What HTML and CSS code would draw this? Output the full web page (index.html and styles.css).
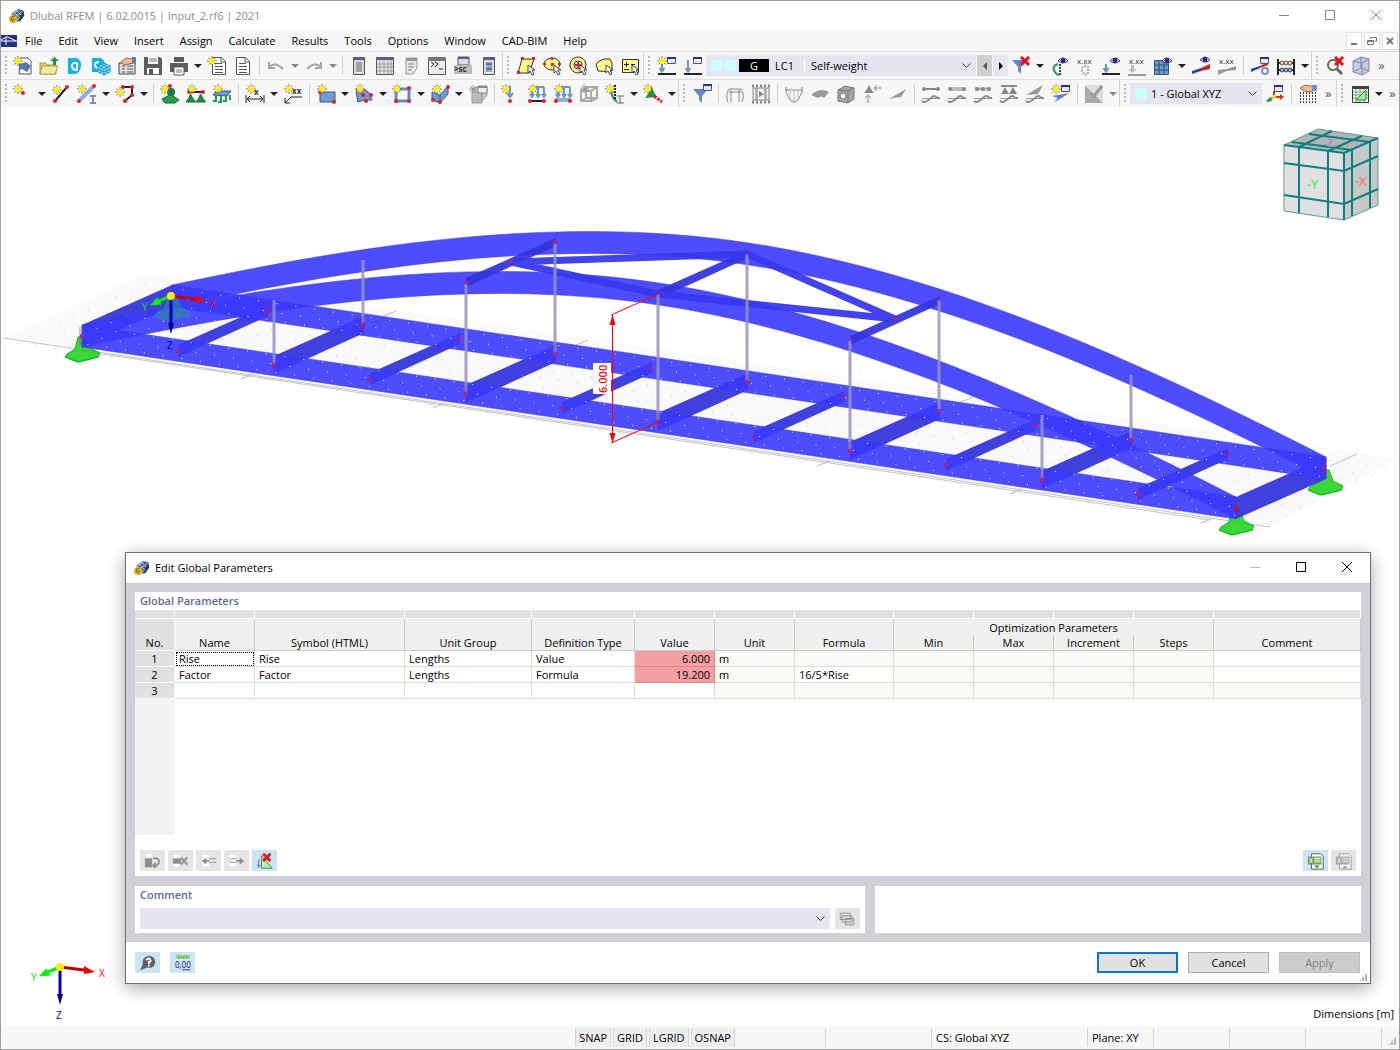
FILE: index.html
```html
<!DOCTYPE html>
<html lang="en">
<head>
  <meta charset="UTF-8">
  <title>Dlubal RFEM</title>
  <link rel="stylesheet" href="styles.css">
</head>
<body>

<!-- icon sprite -->
<svg class="sprite" aria-hidden="true">
  <defs>
    <g id="star"><path d="M5 0v10M0 5h10M1.500 1.500l7 7M8.500 1.500l-7 7" stroke="#7b7b5a"/><circle cx="5" cy="5" r="3" fill="#ffee14"/></g>
    <g id="eye"><path d="M0 4Q5 -2 10 4Q5 8 0 4z" fill="#fff" stroke="#3a3a4a"/><circle cx="5" cy="3.500" r="2.500" fill="#24248c"/></g>
    <g id="win"><path d="M.5.5h8v6h-8z" fill="#e8e8ec" stroke="#555"/><path d="M0 0h9v2H0z" fill="#2a2aa0"/></g>
    <g id="redx"><path d="M1 1l8 8M9 1L1 9" stroke="#e8101c" stroke-width="3"/></g>
    <g id="cursor"><path d="M0 0v8l2-2 2 4 2-1-2-4h3z" fill="#fff" stroke="#444"/></g>
    <g id="page"><path d="M.5.5h9l4 4v13H.5z" fill="#fff" stroke="#555"/><path d="M9 1v4h4M3 6.500h7M3 9.500h8M3 12.500h8M3 15.500h8" fill="none" stroke="#555"/></g>
    <g id="panel"><path d="M.5.5h11v17H.5z" fill="#d8d8d8" stroke="#555"/><path d="M0 0h12v3H0z" fill="#5a5a8c"/><path d="M3 5h6v11H3z" fill="#fff"/><path d="M3 6h6M3 8h6M3 10h6M3 12h6M3 14h6" stroke="#444"/></g>
    <g id="load"><path d="M4 8v7M1.500 12L4 15.500 6.500 12" fill="none" stroke="#6d94c8" stroke-width="2"/><path d="M0 18h18" stroke="#222" stroke-width="2"/></g>
    <g id="supp"><path d="M4.500 0l2 4 3 4H0l3-4z" fill="#1d8f43" stroke="#0c6b2c"/></g>
    <g id="wave"><path d="M1 14.500h18" stroke="#999"/><path d="M1 17q2 2 5 0t4-3q4-4 6 0l3 0" fill="none" stroke="#8c8c8c" stroke-width="2"/></g>
  </defs>
  <symbol id="logo" viewBox="0 0 20 20"><path d="M4 8l8-6 6 2 1 6-5 7H9z" fill="#45608f"/><path d="M7 6l8 8M10 4l7 7M5 9l9-7M8 12l9-7M10 16l8-7" stroke="#c4d3ea"/><path d="M18 4l1 6-5 7-1-3z" fill="#293a5e"/><circle cx="6" cy="14" r="5" fill="#e2b62b"/><path d="M8 11q-5-1-4 4 2 3 4 0-1-3-4 0" fill="none" stroke="#6e5410"/></symbol>
  <symbol id="i-new" viewBox="0 0 20 20"><path d="M7 2h8l3 3v13H6z" fill="#fff" stroke="#555"/><path d="M7 8l6-2 5 4-4 6-5-3-3 2z" fill="#5479ad"/><use href="#star"/></symbol>
  <symbol id="i-open" viewBox="0 0 20 20"><path d="M1 7h6l1 2h9v9H1z" fill="#e3cd6c" stroke="#b39b3c"/><path d="M3 10h16l-3 8H1z" fill="#f7e9a6" stroke="#b39b3c"/><path d="M14 9V5h-3l4.500-4L20 5h-3v4z" fill="#149447"/></symbol>
  <symbol id="i-c" viewBox="0 0 20 20"><path d="M3 2h9q5 3 4 8-1 7-6 8H3z" fill="#14b3e0"/><path d="M12 7q-5-1-5 3t5 4z" fill="none" stroke="#fff" stroke-width="2"/></symbol>
  <symbol id="i-ccube" viewBox="0 0 20 20"><path d="M1 2h9q5 3 3 8l-4 6H1z" fill="#14b3e0"/><path d="M8 6q-4 0-4 3t4 3" fill="none" stroke="#fff" stroke-width="2"/><path d="M7 10l6-3 6 3v6l-6 3-6-3z" fill="#9be0f5" stroke="#119ccc"/><path d="M7 10l6 3 6-3M13 13v6M7 13l6 3 6-3M10 8l6 3v6M16 8l-6 3v6" fill="none" stroke="#119ccc"/></symbol>
  <symbol id="i-hand" viewBox="0 0 20 20"><path d="M2 7h16v11H2z" fill="#ddd" stroke="#444"/><path d="M5 10h3M10 10h6M5 13h3M10 13h6M5 16h3M10 16h6" stroke="#555"/><path d="M4 6l5-4 7 1v4l-8 2-2-1z" fill="#edbd91" stroke="#9a6a40"/><path d="M15 1h4v6h-4z" fill="#577fb3"/></symbol>
  <symbol id="i-save" viewBox="0 0 20 20"><path d="M1 1h16l2 2v16H1z" fill="#5c5c5c"/><path d="M5 1h10v7H5zM4 12h12v6H4z" fill="#fff"/><path d="M6 3h8M6 5h8" stroke="#777"/><path d="M6 13h4v5H6z" fill="#5c5c5c"/></symbol>
  <symbol id="i-print" viewBox="0 0 20 20"><path d="M5 1h10v5H5zM1 7h18v9H1z" fill="#5c5c5c"/><path d="M5 11h10v8H5z" fill="#fff" stroke="#5c5c5c"/><path d="M7 14h6M7 16h6" stroke="#777"/></symbol>
  <symbol id="i-newdoc" viewBox="0 0 20 20"><use href="#page" x="5" y="1"/><use href="#star"/></symbol>
  <symbol id="i-doc" viewBox="0 0 20 20"><use href="#page" x="3" y="1"/></symbol>
  <symbol id="i-undo" viewBox="0 0 20 20"><path d="M3 6v6h6M3 11q6-6 14 2" fill="none" stroke="#a6a6a6" stroke-width="2"/></symbol>
  <symbol id="i-redo" viewBox="0 0 20 20"><path d="M17 6v6h-6M17 11q-6-6-14 2" fill="none" stroke="#a6a6a6" stroke-width="2"/></symbol>
  <symbol id="i-panel" viewBox="0 0 20 20"><use href="#panel" x="4" y="1"/></symbol>
  <symbol id="i-table" viewBox="0 0 20 20"><path d="M1.500 1.500h17v17h-17z" fill="#e8e8e8" stroke="#555"/><path d="M1 1h18v3H1z" fill="#5a5a8c"/><path d="M2 8h16M2 11h16M2 15h16M5 4v14M9 4v14M13 4v14M16 4v14" stroke="#999"/></symbol>
  <symbol id="i-panel2" viewBox="0 0 20 20"><path d="M5 2h11v10l-4 6H5z" fill="#e6e6e6" stroke="#999"/><path d="M5 2h11v3H5z" fill="#999"/><path d="M7 8h6M7 11h6M7 14h4" stroke="#888"/></symbol>
  <symbol id="i-console" viewBox="0 0 20 20"><path d="M1.500 1.500h17v17h-17z" fill="#eee" stroke="#555"/><path d="M1 1h18v4H1z" fill="#777"/><path d="M4 6l3 2-3 3M8 6l3 2-3 3M12 13h4" fill="none" stroke="#222"/></symbol>
  <symbol id="i-panel3" viewBox="0 0 20 20"><use href="#panel" x="4" y="1"/><path d="M7 8h6M7 13h6" stroke="#4a78c0" stroke-width="2"/></symbol>
  <symbol id="i-selbox" viewBox="0 0 20 20"><path d="M6 3h12l-5 14H2z" fill="#fff68a" stroke="#333"/><g fill="#e0202a"><path d="M5 1h3v3H5zM16 1h3v3h-3zM1 15h3v3H1z"/></g><use href="#cursor" x="12" y="9"/></symbol>
  <symbol id="i-selell" viewBox="0 0 20 20"><ellipse cx="10" cy="8" rx="8" ry="6" fill="#fff68a" stroke="#333"/><path d="M10 1v3M10 7v3M1 8h3M9 8h3M16 8h3" stroke="#e0202a" stroke-width="2"/><use href="#cursor" x="12" y="9"/></symbol>
  <symbol id="i-selring" viewBox="0 0 20 20"><circle cx="10" cy="9" r="8" fill="#fff68a" stroke="#333"/><circle cx="10" cy="9" r="4" fill="#fff" stroke="#333"/><path d="M10 6v6M7 9h6" stroke="#e0202a" stroke-width="2"/><use href="#cursor" x="12" y="9"/></symbol>
  <symbol id="i-sellasso" viewBox="0 0 20 20"><path d="M2 8q2-3 8-5h6l2 4v8q-2 1-14 0z" fill="#fff68a" stroke="#333"/><use href="#cursor" x="12" y="9"/></symbol>
  <symbol id="i-selpm" viewBox="0 0 20 20"><path d="M2.500 3.500h16v13h-16z" fill="#fff68a" stroke="#333"/><path d="M4 8.500h5M6.500 6v5M4 13.500h5M11 8.500h4" stroke="#222"/><use href="#cursor" x="12" y="9"/></symbol>
  <symbol id="i-lcnew" viewBox="0 0 20 20"><use href="#load" x="1"/><use href="#win" x="10" y="1"/><use href="#star"/></symbol>
  <symbol id="i-lc" viewBox="0 0 20 20"><use href="#load" x="1"/><use href="#win" x="10" y="1"/><path d="M5 4v8" stroke="#6d94c8" stroke-width="2"/></symbol>
  <symbol id="i-filterx" viewBox="0 0 20 20"><path d="M1 4h15l-6 7v7l-3-3v-4z" fill="#6289c6"/><use href="#redx" x="9"/></symbol>
  <symbol id="i-filterwin" viewBox="0 0 20 20"><path d="M1 5h15l-6 7v7l-3-3v-4z" fill="#6289c6"/><use href="#win" x="11"/></symbol>
  <symbol id="i-nodeeye" viewBox="0 0 20 20"><path d="M9 8q-6 2-4 6 1 4 5 5" fill="none" stroke="#1f9a4c" stroke-width="2"/><path d="M11 8v11" fill="none" stroke="#444" stroke-width="2" stroke-dasharray="2 1"/><use href="#eye" x="9" y="1"/></symbol>
  <symbol id="i-loadeye" viewBox="0 0 20 20"><use href="#load" x="1"/><use href="#eye" x="9" y="1"/></symbol>
  <symbol id="i-grideye" viewBox="0 0 20 20"><path d="M1.500 4.500h14v14h-14z" fill="#6d9bcc" stroke="#35597f"/><path d="M1 9h15M1 14h15M6 4v15M11 4v15" stroke="#2d4e74"/><use href="#eye" x="9" y="1"/></symbol>
  <symbol id="i-reseye" viewBox="0 0 20 20"><path d="M1 15l9-3v3l-9 3z" fill="#2343a8"/><path d="M10 12l9-4v5l-9 2z" fill="#c8202a"/><use href="#eye" x="9" y="0"/></symbol>
  <symbol id="i-resgear" viewBox="0 0 20 20"><path d="M1 13l9-3v2l-9 4z" fill="#2343a8"/><path d="M10 10l8-4v3l-8 3z" fill="#c8202a"/><use href="#win" x="10" y="1"/><circle cx="15" cy="15" r="3" fill="#fff" stroke="#6d94d8" stroke-width="2"/></symbol>
  <symbol id="i-abacus" viewBox="0 0 20 20"><path d="M2 3v16M18 3v16M1 7h18M1 14h18" fill="none" stroke="#222" stroke-width="2"/><g fill="#f0e4a0" stroke="#555"><circle cx="6" cy="7" r="2"/><circle cx="10" cy="7" r="2"/><circle cx="14" cy="7" r="2"/></g><g fill="#8fb2e8" stroke="#446"><circle cx="6" cy="14" r="2"/><circle cx="10" cy="14" r="2"/><circle cx="14" cy="14" r="2"/></g></symbol>
  <symbol id="i-zoomx" viewBox="0 0 20 20"><circle cx="8" cy="9" r="5" fill="#fff" stroke="#666" stroke-width="2"/><path d="M12 13l5 5" stroke="#666" stroke-width="3"/><use href="#redx" x="9"/></symbol>
  <symbol id="i-cube" viewBox="0 0 20 20"><path d="M2 5l8-4 8 2v12l-7 4-9-3z" fill="#c3cbe0" stroke="#8089a6"/><path d="M2 5l9 2 7-4M11 7v12M10 1v11l-8 4M10 12l8 3" fill="none" stroke="#8089a6"/></symbol>
  <symbol id="i-node" viewBox="0 0 20 20"><use href="#star"/><circle cx="10" cy="9" r="2" fill="#e0202a"/></symbol>
  <symbol id="i-line" viewBox="0 0 20 20"><path d="M4 17L16 3" stroke="#222" stroke-width="2"/><circle cx="4" cy="17" r="2" fill="#e0202a"/><circle cx="16" cy="3" r="2" fill="#e0202a"/><use href="#star" x="1" y="1"/></symbol>
  <symbol id="i-member" viewBox="0 0 20 20"><path d="M3 16L16 3" stroke="#8fb0dc" stroke-width="4"/><circle cx="2" cy="17" r="2" fill="#e0202a"/><circle cx="17" cy="2" r="2" fill="#e0202a"/><path d="M13 12h6M16 12v7M13 19h6" stroke="#8a8aa8" stroke-width="2"/><use href="#star"/></symbol>
  <symbol id="i-poly" viewBox="0 0 20 20"><path d="M6 3h11v8l-7 6" fill="none" stroke="#222" stroke-width="2"/><g fill="#e0202a"><circle cx="8" cy="3" r="2"/><circle cx="17" cy="3" r="2"/><circle cx="17" cy="11" r="2"/><circle cx="10" cy="17" r="2"/></g><use href="#star" y="3"/></symbol>
  <symbol id="i-nsup" viewBox="0 0 20 20"><path d="M11 7l2 5 6 4-4 3H5l-3-4 6-3z" fill="#22a050" stroke="#0c6b2c"/><circle cx="11" cy="8" r="4" fill="#1b7c3d"/><use href="#star"/><circle cx="10" cy="2" r="2" fill="#e0202a"/></symbol>
  <symbol id="i-lsup" viewBox="0 0 20 20"><path d="M3 8h14" stroke="#222" stroke-width="2"/><circle cx="3" cy="8" r="2" fill="#e0202a"/><circle cx="17" cy="8" r="2" fill="#e0202a"/><use href="#supp" x="0" y="10"/><use href="#supp" x="10" y="10"/><use href="#star" x="1"/></symbol>
  <symbol id="i-ssup" viewBox="0 0 20 20"><path d="M1 11l4-4h14l-4 5z" fill="#6f9bd0" stroke="#35597f"/><path d="M4 12v5h-3M9 12v6h-3M14 12v5h-3M18 11v5" fill="none" stroke="#1d9f53" stroke-width="2"/><use href="#star" x="1"/></symbol>
  <symbol id="i-surf" viewBox="0 0 20 20"><path d="M4 8h15v10H4z" fill="#6f9bd0" stroke="#35597f"/><circle cx="4" cy="8" r="2" fill="#e0202a"/><circle cx="18" cy="18" r="2" fill="#e0202a"/><use href="#star" x="1"/></symbol>
  <symbol id="i-nurbs" viewBox="0 0 20 20"><path d="M2 8q7-6 13 1l3 7q-8-1-14 2z" fill="#6f9bd0" stroke="#35597f"/><g fill="#e0202a"><circle cx="4" cy="6" r="2"/><circle cx="9" cy="11" r="2"/><circle cx="17" cy="11" r="2"/><circle cx="12" cy="17" r="2"/></g><use href="#star" x="1"/></symbol>
  <symbol id="i-opening" viewBox="0 0 20 20"><path d="M4 5h13v12H4z" fill="#fff" stroke="#5f8cc4" stroke-width="3"/><g fill="#e0202a"><circle cx="17" cy="4" r="2"/><circle cx="4" cy="17" r="2"/><circle cx="17" cy="17" r="2"/></g><use href="#star"/></symbol>
  <symbol id="i-solid" viewBox="0 0 20 20"><path d="M2 8l8 3 8-9v8l-8 9-8-3z" fill="#6f9bd0" stroke="#35597f"/><path d="M10 11v8" stroke="#35597f"/><g fill="#e0202a"><circle cx="18" cy="3" r="2"/><circle cx="3" cy="16" r="2"/><circle cx="10" cy="18" r="2"/></g><use href="#star" x="2"/></symbol>
  <symbol id="i-block" viewBox="0 0 20 20"><path d="M4 8h10v11H4z" fill="#bbb" stroke="#999"/><path d="M4 8l4-5h11v8l-5 6V8z" fill="#ccc" stroke="#999"/><path d="M10 2h9v7h-9z" fill="#eee" stroke="#888"/><path d="M10 2h9v2h-9z" fill="#888"/><path d="M5 1v8M1 5h8M2 2l6 6M8 2L2 8" stroke="#999"/></symbol>
  <symbol id="i-nload" viewBox="0 0 20 20"><use href="#star"/><path d="M9 2v10M6 9l3 4 3-4" fill="none" stroke="#6d94c8" stroke-width="2"/><circle cx="9" cy="17" r="2" fill="#e0202a"/></symbol>
  <symbol id="i-lload" viewBox="0 0 20 20"><path d="M5 3h12M5 3v10M11 3v10M17 3v10M3 10l2 3 2-3M9 10l2 3 2-3M15 10l2 3 2-3" fill="none" stroke="#6d94c8" stroke-width="2"/><path d="M3 17h14" stroke="#222" stroke-width="2"/><circle cx="3" cy="17" r="2" fill="#e0202a"/><circle cx="17" cy="17" r="2" fill="#e0202a"/><use href="#star" x="1"/></symbol>
  <symbol id="i-sload" viewBox="0 0 20 20"><path d="M2 14h16v4H2z" fill="#8fb0dc"/><path d="M5 3h12M5 3v10M11 3v10M17 3v10M3 10l2 3 2-3M9 10l2 3 2-3M15 10l2 3 2-3" fill="none" stroke="#6d94c8" stroke-width="2"/><circle cx="3" cy="17" r="2" fill="#e0202a"/><circle cx="17" cy="17" r="2" fill="#e0202a"/><use href="#star" x="1"/></symbol>
  <symbol id="i-gload" viewBox="0 0 20 20"><path d="M2 7h10v10H2zM7 3h11v11H7zM2 7l5-4M12 7l6-4M12 17l6-3M2 17l5-3" fill="none" stroke="#aaa" stroke-width="2"/><path d="M5 0v9M1 5h9M2 2l6 6M8 2L2 8" stroke="#999"/></symbol>
  <symbol id="i-imper" viewBox="0 0 20 20"><path d="M6 4q0 10 6 14" fill="none" stroke="#1f9a4c" stroke-width="2"/><path d="M10 1v15" stroke="#222" stroke-width="2" stroke-dasharray="2 1"/><path d="M12 12h7M15 12v7M12 19h7" stroke="#666"/><use href="#star"/></symbol>
  <symbol id="i-conn" viewBox="0 0 20 20"><path d="M8 2l4 8 2 3-12 1 3-4z" fill="#22904a"/><path d="M11 12l8 6" stroke="#e0202a" stroke-width="3" stroke-dasharray="3 1"/><use href="#star"/></symbol>
  <symbol id="i-frame" viewBox="0 0 20 20"><path d="M3 18q-3-7 1-13h12q4 6 1 13M6 18V6M14 18V6M4 8h12" fill="none" stroke="#888"/></symbol>
  <symbol id="i-film" viewBox="0 0 20 20"><path d="M1 2h18M1 18h18" stroke="#888" stroke-width="3" stroke-dasharray="2 2"/><path d="M2 4h3v12H2zM15 4h3v12h-3zM6 4h8v12H6z" fill="#eee" stroke="#888"/><path d="M8 7l5 3-5 3z" fill="#888"/></symbol>
  <symbol id="i-moment" viewBox="0 0 20 20"><path d="M1 6h18M2 3v5l4 8q4 4 8 0l4-8V3" fill="none" stroke="#888"/><path d="M6 7v9M10 7v10M14 7v9" stroke="#bbb"/></symbol>
  <symbol id="i-shell" viewBox="0 0 20 20"><path d="M1 11q9-8 18-3l-5 6q-3-3-6 0z" fill="#999"/></symbol>
  <symbol id="i-dice" viewBox="0 0 20 20"><path d="M2 6l7-4 9 2v11l-6 4-10-2z" fill="#a4a4a4" stroke="#777"/><path d="M2 6l10 1v12M12 7l6-3" fill="none" stroke="#777"/><circle cx="7" cy="12" r="3" fill="#fff" stroke="#777"/></symbol>
  <symbol id="i-reac" viewBox="0 0 20 20"><path d="M7 1l2 4 3 4H2l3-4z" fill="#888"/><path d="M12 4h7M15 1l-3 3 3 3M6 11v8M3 14l3-3 3 3" fill="none" stroke="#888" stroke-width="1"/></symbol>
  <symbol id="i-slope" viewBox="0 0 20 20"><path d="M1 15L18 5l-5 8q-5 0-12 2z" fill="#999"/></symbol>
  <symbol id="i-w1" viewBox="0 0 20 20"><use href="#wave"/><path d="M2 5h16" stroke="#888" stroke-width="2"/><circle cx="3" cy="5" r="2" fill="#888"/><circle cx="17" cy="5" r="2" fill="#888"/></symbol>
  <symbol id="i-w2" viewBox="0 0 20 20"><use href="#wave"/><path d="M3 5h14" stroke="#bbb" stroke-width="4"/><circle cx="3" cy="5" r="2" fill="#888"/><circle cx="17" cy="5" r="2" fill="#888"/></symbol>
  <symbol id="i-w3" viewBox="0 0 20 20"><use href="#wave"/><path d="M2 5h16" stroke="#bbb" stroke-width="3"/><circle cx="4" cy="5" r="2" fill="#888"/><circle cx="10" cy="5" r="2" fill="#888"/><circle cx="16" cy="5" r="2" fill="#888"/></symbol>
  <symbol id="i-w4" viewBox="0 0 20 20"><use href="#wave"/><path d="M2 2h16" stroke="#888" stroke-width="2"/><path d="M6 3l4 7H2zM14 3l4 7h-8z" fill="#888"/></symbol>
  <symbol id="i-w5" viewBox="0 0 20 20"><use href="#wave"/><path d="M1 11L18 1l-5 9z" fill="#999"/></symbol>
  <symbol id="i-resnew" viewBox="0 0 20 20"><path d="M1 12l17-3-6 4-10 6 5-5z" fill="#5a7ae0"/><use href="#win" x="10" y="1"/><use href="#star"/></symbol>
  <symbol id="i-tri" viewBox="0 0 20 20"><path d="M1 1v18h18z" fill="#aaa"/><path d="M1 1h18v18z" fill="#ddd"/><path d="M7 10l3 2 8-10" fill="none" stroke="#999" stroke-width="3"/></symbol>
  <symbol id="i-axes" viewBox="0 0 20 20"><use href="#win" x="9" y="1"/><path d="M9 7v6M9 13h9" stroke="#c83818" stroke-width="2"/><path d="M9 13l-7 4" stroke="#1f9a4c" stroke-width="2"/><path d="M5 13l-4 5 6-1z" fill="#1f9a4c"/><path d="M15 10l4 3-4 3z" fill="#c83818"/><circle cx="9" cy="13" r="2" fill="#ffdf20"/></symbol>
  <symbol id="i-gridhand" viewBox="0 0 20 20"><path d="M2 9h16M2 12h16M2 15h16M2 18h16" stroke="#444" stroke-width="2" stroke-dasharray="1 2"/><path d="M2 4l6-3 8 2-2 5-8-1z" fill="#edbd91" stroke="#9a6a40"/><path d="M14 1h5v6h-5z" fill="#6d94c8"/></symbol>
  <symbol id="i-gtable" viewBox="0 0 20 20"><path d="M2.500 2.500h16v16h-16z" fill="#fff" stroke="#333"/><path d="M2 2h17v3H2z" fill="#444"/><path d="M3 8h15M3 11h15M3 14h15M6 5v13M10 5v13M14 5v13" stroke="#6aa66a"/><path d="M16 6v10H6z" fill="#a9e6a0" stroke="#2b8a3a"/></symbol>
</svg>

<div class="app">
  <header class="titlebar">
    <svg class="logo"><use href="#logo"/></svg>
    <span class="title">Dlubal RFEM | 6.02.0015 | Input_2.rf6 | 2021</span>
    <div class="winbtns">
      <button aria-label="Minimize"><svg viewBox="0 0 12 12"><path d="M1 6.500h10"/></svg></button>
      <button aria-label="Maximize"><svg viewBox="0 0 12 12"><path d="M1.500 1.500h9v9h-9z"/></svg></button>
      <button aria-label="Close"><svg viewBox="0 0 12 12"><path d="M1 1l10 10M11 1L1 11"/></svg></button>
    </div>
  </header>

  <nav class="menubar">
    <svg class="menulogo" viewBox="0 0 16 12"><path d="M0 0h16v12H0z" fill="#26307c"/><path d="M0 6h16M5 2v8M0 5l5-3h2l8 4" fill="none" stroke="#fff"/></svg>
    <button>File</button><button>Edit</button><button>View</button><button>Insert</button><button>Assign</button><button>Calculate</button><button>Results</button><button>Tools</button><button>Options</button><button>Window</button><button>CAD-BIM</button><button>Help</button>
    <div class="mdi">
      <button aria-label="Minimize document"><svg viewBox="0 0 10 10"><path d="M2 8h6"/></svg></button>
      <button aria-label="Restore document"><svg viewBox="0 0 10 10"><path class="thin" d="M3.500 3V1.500h6v4H8M.5 4.500h6v4h-6zM.5 5.500h6"/></svg></button>
      <button aria-label="Close document"><svg viewBox="0 0 10 10"><path d="M2 2l6 6M8 2L2 8"/></svg></button>
    </div>
  </nav>

  <div class="toolbar">
    <div class="group">
      <button class="tool" aria-label="New"><svg><use href="#i-new"/></svg></button>
      <button class="tool" aria-label="Open"><svg><use href="#i-open"/></svg></button>
      <button class="tool" aria-label="Dlubal Center"><svg><use href="#i-c"/></svg></button>
      <button class="tool" aria-label="Block manager"><svg><use href="#i-ccube"/></svg></button>
      <button class="tool" aria-label="Model data"><svg><use href="#i-hand"/></svg></button>
      <button class="tool" aria-label="Save"><svg><use href="#i-save"/></svg></button>
      <button class="tool" aria-label="Print"><svg><use href="#i-print"/></svg></button>
      <button class="drop" aria-label="Print options"></button>
      <button class="tool" aria-label="New report"><svg><use href="#i-newdoc"/></svg></button>
      <button class="tool" aria-label="Report"><svg><use href="#i-doc"/></svg></button>
      <i class="sep"></i>
      <button class="tool" aria-label="Undo"><svg><use href="#i-undo"/></svg></button>
      <button class="drop off" aria-label="Undo list"></button>
      <button class="tool" aria-label="Redo"><svg><use href="#i-redo"/></svg></button>
      <button class="drop off" aria-label="Redo list"></button>
      <i class="sep"></i>
      <button class="tool" aria-label="Navigator"><svg><use href="#i-panel"/></svg></button>
      <button class="tool" aria-label="Tables"><svg><use href="#i-table"/></svg></button>
      <button class="tool" aria-label="Control panel"><svg><use href="#i-panel2"/></svg></button>
      <button class="tool" aria-label="Console"><svg><use href="#i-console"/></svg></button>
      <button class="tool" aria-label="Script manager"><svg viewBox="0 0 20 20"><path d="M5 1h11v8H5z" fill="#ddd" stroke="#555"/><path d="M5 1h11v2H5z" fill="#5a5a8c"/><path d="M1 9h18v9H1z" fill="#bbb"/><text x="1" y="16" class="tiny bold">&gt;sc</text></svg></button>
      <button class="tool" aria-label="Plausibility"><svg><use href="#i-panel3"/></svg></button>
    </div>
    <div class="group">
      <button class="tool" aria-label="Select by rhomboid"><svg><use href="#i-selbox"/></svg></button>
      <button class="tool" aria-label="Select by ellipse"><svg><use href="#i-selell"/></svg></button>
      <button class="tool" aria-label="Select by ring"><svg><use href="#i-selring"/></svg></button>
      <button class="tool" aria-label="Select by lasso"><svg><use href="#i-sellasso"/></svg></button>
      <button class="tool" aria-label="Select special"><svg><use href="#i-selpm"/></svg></button>
    </div>
    <div class="group">
      <button class="tool" aria-label="New load case"><svg><use href="#i-lcnew"/></svg></button>
      <button class="tool" aria-label="Load cases"><svg><use href="#i-lc"/></svg></button>
      <div class="combo loadcase">
        <i class="swatch"></i><i class="swatch"></i><b class="tag">G</b><span class="lc">LC1</span>
        <select aria-label="Load case"><option>Self-weight</option></select>
      </div>
      <button class="step prev" aria-label="Previous load case"></button>
      <button class="step next" aria-label="Next load case"></button>
      <button class="tool" aria-label="Clear filter"><svg><use href="#i-filterx"/></svg></button>
      <button class="drop" aria-label="Filter options"></button>
      <button class="tool" aria-label="Show imperfections"><svg><use href="#i-nodeeye"/></svg></button>
      <button class="tool" aria-label="Imperfection values"><svg viewBox="0 0 20 20"><text x="2" y="8" class="tiny">x.xx</text><path d="M11 10q-5 1-4 5 1 3 5 4M13 10v9" fill="none" stroke="#aaa" stroke-width="2" stroke-dasharray="2 1"/></svg></button>
      <button class="tool" aria-label="Show loads"><svg><use href="#i-loadeye"/></svg></button>
      <button class="tool" aria-label="Load values"><svg viewBox="0 0 20 20"><text x="2" y="8" class="tiny">x.xx</text><path d="M4 9h3v4h3l-4.500 4L1 13h3z" fill="#bbb"/><path d="M1 19h18" stroke="#999" stroke-width="2"/></svg></button>
      <button class="tool" aria-label="Show mesh"><svg><use href="#i-grideye"/></svg></button>
      <button class="drop" aria-label="Mesh options"></button>
      <button class="tool" aria-label="Show results"><svg><use href="#i-reseye"/></svg></button>
      <button class="tool" aria-label="Result values"><svg viewBox="0 0 20 20"><text x="2" y="8" class="tiny">x.xx</text><path d="M1 14l9-1 9-3v4l-9 1-9 4z" fill="#999"/></svg></button>
      <i class="sep"></i>
      <button class="tool" aria-label="Calculate"><svg><use href="#i-resgear"/></svg></button>
      <button class="tool" aria-label="Calculate all"><svg><use href="#i-abacus"/></svg></button>
      <button class="drop" aria-label="Calculation options"></button>
    </div>
    <div class="group last">
      <button class="tool" aria-label="Reset zoom"><svg><use href="#i-zoomx"/></svg></button>
      <button class="tool" aria-label="Isometric view"><svg><use href="#i-cube"/></svg></button>
      <button class="more" aria-label="More view tools">»</button>
    </div>
  </div>

  <div class="toolbar">
    <div class="group">
      <button class="tool" aria-label="New node"><svg><use href="#i-node"/></svg></button>
      <button class="drop" aria-label="Node types"></button>
      <button class="tool" aria-label="New line"><svg><use href="#i-line"/></svg></button>
      <button class="tool" aria-label="New member"><svg><use href="#i-member"/></svg></button>
      <button class="drop" aria-label="Member types"></button>
      <button class="tool" aria-label="New polyline"><svg><use href="#i-poly"/></svg></button>
      <button class="drop" aria-label="Line types"></button>
      <i class="sep"></i>
      <button class="tool" aria-label="Nodal support"><svg><use href="#i-nsup"/></svg></button>
      <button class="tool" aria-label="Line support"><svg><use href="#i-lsup"/></svg></button>
      <button class="tool" aria-label="Surface support"><svg><use href="#i-ssup"/></svg></button>
      <i class="sep"></i>
      <button class="tool" aria-label="Dimension"><svg viewBox="0 0 20 20"><path d="M1 11v8M19 11v8M2 15h16M5 12l-3 3 3 3M15 12l3 3-3 3" fill="none" stroke="#222"/><text x="9" y="11" class="tiny bold">x</text><use href="#star" x="1"/></svg></button>
      <button class="drop" aria-label="Dimension types"></button>
      <button class="tool" aria-label="Note"><svg viewBox="0 0 20 20"><path d="M19 13H8l-6 6M2 14v5h5" fill="none" stroke="#222"/><text x="9" y="10" class="tiny bold">xx</text><use href="#star" x="1"/></svg></button>
      <i class="sep"></i>
      <button class="tool" aria-label="New surface"><svg><use href="#i-surf"/></svg></button>
      <button class="drop" aria-label="Surface types"></button>
      <button class="tool" aria-label="New NURBS surface"><svg><use href="#i-nurbs"/></svg></button>
      <button class="drop" aria-label="NURBS types"></button>
      <button class="tool" aria-label="New opening"><svg><use href="#i-opening"/></svg></button>
      <button class="drop" aria-label="Opening types"></button>
      <button class="tool" aria-label="New solid"><svg><use href="#i-solid"/></svg></button>
      <button class="drop" aria-label="Solid types"></button>
      <button class="tool" aria-label="New block"><svg><use href="#i-block"/></svg></button>
      <i class="sep"></i>
      <button class="tool" aria-label="Nodal load"><svg><use href="#i-nload"/></svg></button>
      <button class="tool" aria-label="Member load"><svg><use href="#i-lload"/></svg></button>
      <button class="tool" aria-label="Surface load"><svg><use href="#i-sload"/></svg></button>
      <button class="tool" aria-label="Solid load"><svg><use href="#i-gload"/></svg></button>
      <button class="tool" aria-label="Imperfection"><svg><use href="#i-imper"/></svg></button>
      <button class="drop" aria-label="Imperfection types"></button>
      <button class="tool" aria-label="Imposed deformation"><svg><use href="#i-conn"/></svg></button>
      <button class="drop" aria-label="Deformation types"></button>
    </div>
    <div class="group">
      <button class="tool" aria-label="Result filter"><svg><use href="#i-filterwin"/></svg></button>
      <i class="sep"></i>
      <button class="tool" aria-label="Deformation"><svg><use href="#i-frame"/></svg></button>
      <button class="tool" aria-label="Animation"><svg><use href="#i-film"/></svg></button>
      <i class="sep"></i>
      <button class="tool" aria-label="Member results"><svg><use href="#i-moment"/></svg></button>
      <button class="tool" aria-label="Surface results"><svg><use href="#i-shell"/></svg></button>
      <button class="tool" aria-label="Solid results"><svg><use href="#i-dice"/></svg></button>
      <button class="tool" aria-label="Support reactions"><svg><use href="#i-reac"/></svg></button>
      <button class="tool" aria-label="Sections"><svg><use href="#i-slope"/></svg></button>
      <i class="sep"></i>
      <button class="tool" aria-label="Line diagram"><svg><use href="#i-w1"/></svg></button>
      <button class="tool" aria-label="Member diagram"><svg><use href="#i-w2"/></svg></button>
      <button class="tool" aria-label="Node diagram"><svg><use href="#i-w3"/></svg></button>
      <button class="tool" aria-label="Support diagram"><svg><use href="#i-w4"/></svg></button>
      <button class="tool" aria-label="Section diagram"><svg><use href="#i-w5"/></svg></button>
      <button class="tool" aria-label="New section"><svg><use href="#i-resnew"/></svg></button>
      <i class="sep"></i>
      <button class="tool" aria-label="Smooth results"><svg><use href="#i-tri"/></svg></button>
      <button class="drop off" aria-label="Smoothing options"></button>
    </div>
    <div class="group">
      <div class="combo coord">
        <i class="swatch"></i>
        <select aria-label="Coordinate system"><option>1 - Global XYZ</option></select>
      </div>
      <button class="tool" aria-label="Edit coordinate system"><svg><use href="#i-axes"/></svg></button>
      <i class="sep"></i>
      <button class="tool" aria-label="Grid settings"><svg><use href="#i-gridhand"/></svg></button>
      <button class="more" aria-label="More grid tools">»</button>
    </div>
    <div class="group last">
      <button class="tool" aria-label="Parameters"><svg><use href="#i-gtable"/></svg></button>
      <button class="drop" aria-label="Parameter options"></button>
      <button class="more" aria-label="More parameter tools">»</button>
    </div>
  </div>

  <main class="viewport">
    <svg class="scene" viewBox="1 107 1398 919" preserveAspectRatio="xMidYMin meet">
      <defs>
        <path id="arch" d="M82 325C274 284 467 254 659 283C851 312 1044 399 1236 497L1236 519C1044 421 851 334 659 305C467 276 274 306 82 347z"/>
        <path id="chord" d="M82 325L1236 497V519L82 347z"/>
        <path id="thick" d="M0-9L90-49V-32L0 9z"/>
        <path id="thin" d="M0-6L90-46V-35L0 6z"/>
        <path id="brace" d="M0-4L90-44V-36L0 5z"/>
        <g id="dots">
          <path d="M17 343L1266 529"/><path d="M31 336L1280 522"/><path d="M45 330L1294 516"/><path d="M59 323L1308 509"/><path d="M73 317L1322 503"/><path d="M88 310L1337 496"/><path d="M102 304L1351 490"/><path d="M116 297L1365 483"/><path d="M131 291L1380 477"/><path d="M145 284L1393 470"/>
        </g>
        <clipPath id="steel"><use href="#arch"/><use href="#arch" x="90" y="-40"/><use href="#chord"/><use href="#chord" x="90" y="-40"/></clipPath>
        <g id="support"><path d="M-4-12h8l4 11 10 5-2 4-19 5-14-5 2-3 8-5z"/><path d="M-17 8l12 5 22-5" fill="none"/></g>
        <g id="triad">
          <path d="M0 0l24 3" stroke="#c00000" stroke-width="3"/><path d="M24-1l11 6-11 2z" fill="#f00000"/>
          <path d="M0 0l-12 5" stroke="#00e800" stroke-width="3"/><path d="M-20 9l6-7 4 6z" fill="#00f800" stroke="#00f800"/>
          <path d="M0 0v28" stroke="#0000c8" stroke-width="3"/><path d="M-3 27h6l-3 11z" fill="#00008c"/>
          <circle r="4" fill="#ffee00"/>
        </g>
      </defs>

      <!-- work plane grid -->
      <path d="M3 338L146 273L1398 459L1270 527z" fill="#fafafa"/>
      <use href="#dots" class="dots grey"/>
      <path d="M3 338L1270 527M82 351L1210 520" stroke="#c4c4c4"/>
      <path d="M241 379l12-5M433 408l12-5M625 437l12-5M817 466l12-5M1010 494l12-5M1201 523l12-5M384 316l12-5M576 345l12-5M961 402l12-5M1330 466l27-12" stroke="#bbb"/>

      <!-- supports -->
      <g class="support"><use href="#support" x="82" y="349"/><use href="#support" x="1236" y="522"/><use href="#support" x="1325" y="482"/></g>

      <!-- cross beams, bottom chords and arches -->
      <g class="cross">
        <use href="#thin" x="178" y="351"/><use href="#thick" x="274" y="365"/><use href="#thin" x="370" y="379"/><use href="#thick" x="466" y="394"/><use href="#thin" x="562" y="408"/><use href="#thick" x="658" y="422"/><use href="#thin" x="754" y="437"/><use href="#thick" x="850" y="451"/><use href="#thin" x="946" y="465"/><use href="#thick" x="1042" y="480"/><use href="#thin" x="1138" y="494"/>
        <path d="M82 325L172 285V307L82 347z"/><path d="M1236 497L1326 457V479L1236 519z"/>
      </g>
      <g class="beam"><use href="#arch" x="90" y="-40"/><use href="#chord" x="90" y="-40"/><use href="#arch"/><use href="#chord"/></g>
      <g class="cross">
        <use href="#brace" x="466" y="282"/><use href="#brace" x="658" y="294"/><use href="#brace" x="850" y="340"/>
      </g>
      <path class="diag" d="M511 262L747 254L895 319L658 294z"/>
      <use href="#dots" class="dots white" clip-path="url(#steel)"/>
      <use href="#support" class="hiddensupport" x="172" y="308"/>

      <!-- hangers -->
      <path class="hanger" d="M274 300V365M466 282V394M658 294V422M850 340V451M1042 415V480M363 260V325M555 242V354M747 254V382M939 300V411M1131 375V440"/>
      <g class="node">
        <path class="outline" d="M266 301v21M268 301v21M361 316v20M364 316v20M555 344v20M747 373v20M1041 470v20M1044 470v20M1138 484v20M1140 484v20M272 357v16M466 385v18M658 413v18M850 442v18M1132 430v20M1326 458v20M1236 498v20M80 327v18M171 287v20"/>
        <circle cx="178" cy="351" r="2"/><circle cx="274" cy="365" r="2"/><circle cx="370" cy="379" r="2"/><circle cx="466" cy="394" r="2"/><circle cx="562" cy="408" r="2"/><circle cx="658" cy="422" r="2"/><circle cx="754" cy="437" r="2"/><circle cx="850" cy="451" r="2"/><circle cx="946" cy="465" r="2"/><circle cx="1042" cy="480" r="2"/><circle cx="1138" cy="494" r="2"/>
        <circle cx="267" cy="311" r="2"/><circle cx="363" cy="325" r="2"/><circle cx="459" cy="339" r="2"/><circle cx="555" cy="354" r="2"/><circle cx="651" cy="368" r="2"/><circle cx="747" cy="382" r="2"/><circle cx="843" cy="397" r="2"/><circle cx="939" cy="411" r="2"/><circle cx="1035" cy="425" r="2"/><circle cx="1131" cy="440" r="2"/><circle cx="1227" cy="454" r="2"/>
        <circle cx="466" cy="282" r="2"/><circle cx="555" cy="242" r="2"/><circle cx="511" cy="262" r="2"/><circle cx="658" cy="294" r="1"/><circle cx="747" cy="254" r="1"/><circle cx="850" cy="340" r="1"/><circle cx="939" cy="300" r="1"/><circle cx="895" cy="319" r="2"/><circle cx="1324" cy="468" r="2"/><circle cx="82" cy="336" r="2"/>
      </g>
      <circle cx="1236" cy="508" r="2" fill="#ff0000"/>

      <!-- rise dimension -->
      <path d="M612.500 315v128" stroke="#ff0000"/>
      <path d="M611 315l47-21M611 443l47-21" stroke="#ff0000"/>
      <path d="M612.500 315l-3 10h6zM612.500 443l-3-10h6z" fill="#ff0000"/>
      <path d="M593 363h18v31h-18z" fill="#fff"/>
      <text class="dimtext" transform="translate(607 393) rotate(-90)">6.000</text>

      <!-- coordinate axes -->
      <use href="#triad" x="171" y="296"/>
      <text x="210" y="307" fill="#ff0000">X</text><text x="142" y="311" fill="#00e000">Y</text><text x="167" y="349" fill="#0000ff">Z</text>
      <use href="#triad" x="60" y="967"/>
      <text x="99" y="977" fill="#ff0000">X</text><text x="31" y="981" fill="#00e000">Y</text><text x="56" y="1019" fill="#0000ff">Z</text>

      <!-- view cube -->
      <path d="M1284 145L1344 153V220L1284 211z" fill="#e0e0e0"/>
      <path d="M1344 153L1378 138V205L1344 220z" fill="#c8c8c8"/>
      <path d="M1284 145L1318 129L1378 138L1344 153z" fill="#b4b4b4"/>
      <path class="cubeedge" d="M1284 145L1318 129L1378 138V205L1344 220L1284 211z"/>
      <path class="cubeline" d="M1284 145L1344 153L1378 138M1344 153V220M1299 147V213M1328 151V217M1284 163L1344 171L1378 156M1284 195L1344 204L1378 189M1352 150V216M1370 142V208M1299 147L1332 131M1328 151L1362 136M1292 142L1352 150M1309 134L1370 142"/>
      <text x="1307" y="189" class="face" fill="#7be08a">-Y</text><text x="1355" y="186" class="face" fill="#ef8d8d">-X</text><text x="1324" y="147" fill="#8f8fc8">-Z</text>
    </svg>
    <span class="units">Dimensions [m]</span>

    <section class="dialog" role="dialog" aria-labelledby="dlgTitle">
      <header class="dlgbar">
        <svg class="logo"><use href="#logo"/></svg>
        <h1 id="dlgTitle">Edit Global Parameters</h1>
        <div class="winbtns">
          <button aria-label="Minimize" disabled><svg viewBox="0 0 12 12"><path d="M1 6.500h10"/></svg></button>
          <button aria-label="Maximize"><svg viewBox="0 0 12 12"><path d="M1.500 1.500h9v9h-9z"/></svg></button>
          <button aria-label="Close"><svg viewBox="0 0 12 12"><path d="M1 1l10 10M11 1L1 11"/></svg></button>
        </div>
      </header>

      <div class="dlgbody">
        <div class="panel">
          <h2>Global Parameters</h2>
          <div class="tablewrap">
            <table>
              <colgroup><col class="c40"><col class="c80"><col class="c150"><col class="c127"><col class="c103"><col class="c80"><col class="c80"><col class="c99"><col class="c80"><col class="c80"><col class="c80"><col class="c80"><col></colgroup>
              <thead>
                <tr class="strip"><td></td><td></td><td></td><td></td><td></td><td></td><td></td><td></td><td></td><td></td><td></td><td></td><td></td></tr>
                <tr><th rowspan="2" class="no">No.</th><th rowspan="2">Name</th><th rowspan="2">Symbol (HTML)</th><th rowspan="2">Unit Group</th><th rowspan="2">Definition Type</th><th rowspan="2">Value</th><th rowspan="2">Unit</th><th rowspan="2">Formula</th><th colspan="4" class="top">Optimization Parameters</th><th rowspan="2">Comment</th></tr>
                <tr><th>Min</th><th>Max</th><th>Increment</th><th>Steps</th></tr>
              </thead>
              <tbody>
                <tr><th class="no">1</th><td class="sel">Rise</td><td>Rise</td><td>Lengths</td><td>Value</td><td class="red">6.000</td><td class="ro">m</td><td class="ro"></td><td class="ro"></td><td class="ro"></td><td class="ro"></td><td class="ro"></td><td></td></tr>
                <tr><th class="no">2</th><td>Factor</td><td>Factor</td><td>Lengths</td><td>Formula</td><td class="red">19.200</td><td class="ro">m</td><td>16/5*Rise</td><td class="ro"></td><td class="ro"></td><td class="ro"></td><td class="ro"></td><td></td></tr>
                <tr><th class="no">3</th><td></td><td></td><td></td><td></td><td></td><td class="ro"></td><td class="ro"></td><td class="ro"></td><td class="ro"></td><td class="ro"></td><td class="ro"></td><td class="ro"></td></tr>
              </tbody>
            </table>
          </div>
          <div class="actions">
            <button class="sq" aria-label="Insert row" disabled><svg viewBox="0 0 20 20"><path d="M2 2h7v4H2z" fill="#fff"/><path d="M1 7h8v10H1z" fill="#8e8e8e"/><path d="M10 7h5q4 4-1 8h-3M13 12l-3 3 3 3" fill="none" stroke="#8e8e8e" stroke-width="2"/></svg></button>
            <button class="sq" aria-label="Delete row" disabled><svg viewBox="0 0 20 20"><path d="M2 3h7v13H2z" fill="#fff"/><path d="M1 7h9v6H1z" fill="#8e8e8e"/><path d="M10 6l7 8M17 6l-7 8" stroke="#8e8e8e" stroke-width="2"/></svg></button>
            <button class="sq" aria-label="Move left" disabled><svg viewBox="0 0 20 20"><path d="M3 3h7v13H3z" fill="#fff"/><path d="M2 10l5-4v8z" fill="#8e8e8e"/><path d="M6 10h4" stroke="#8e8e8e" stroke-width="2"/><path d="M10 7.500h8M10 11.500h8" stroke="#8e8e8e"/></svg></button>
            <button class="sq" aria-label="Move right" disabled><svg viewBox="0 0 20 20"><path d="M2 3h7v13H2z" fill="#fff"/><path d="M18 10l-5-4v8z" fill="#8e8e8e"/><path d="M9 10h5" stroke="#8e8e8e" stroke-width="2"/><path d="M2 7.500h7M2 11.500h7" stroke="#8e8e8e"/></svg></button>
            <button class="sq blue" aria-label="Delete unused parameters"><svg viewBox="0 0 20 20"><path d="M6 4v14h12z" fill="#b7efae" stroke="#2b8a3a"/><path d="M3 8v9M1 14l2 3 2-3" fill="none" stroke="#4a78c0"/><use href="#redx" x="7" y="1"/></svg></button>
            <span class="grow"></span>
            <button class="sq blue" aria-label="Export to Excel"><svg viewBox="0 0 20 20"><path d="M5 2h10l3 3v14H5z" fill="#fff" stroke="#555"/><path d="M1 5h15v9H1z" fill="#6fa35a"/><path d="M3 7l3 5M6 7l-3 5M8 7h7M8 9h7M8 11h7" stroke="#fff"/><path d="M8 15h6l-3 3z" fill="#3f8a2f"/></svg></button>
            <button class="sq" aria-label="Import from Excel" disabled><svg viewBox="0 0 20 20"><path d="M5 2h10l3 3v14H5z" fill="#f4f4f4" stroke="#999"/><path d="M1 5h15v9H1z" fill="#aaa"/><path d="M3 7l3 5M6 7l-3 5M8 7h7M8 9h7M8 11h7" stroke="#eee"/><path d="M8 18h6l-3-3z" fill="#999"/></svg></button>
          </div>
        </div>

        <div class="bottomrow">
          <div class="panel comment">
            <h2><label for="comment">Comment</label></h2>
            <div class="commentline">
              <select id="comment" class="combo"><option></option></select>
              <button class="sq" aria-label="Comment library" disabled><svg viewBox="0 0 20 20"><path d="M2.500 3.500h11v7h-11zM4.500 6.500h11v7h-11zM8.500 9.500h9v7h-9z" fill="#ddd" stroke="#8e8e8e"/></svg></button>
            </div>
          </div>
          <div class="panel preview"></div>
        </div>
      </div>

      <footer class="dlgfoot">
        <button class="sq blue" aria-label="Help"><svg viewBox="0 0 20 20"><path d="M1 18l3-6q-1-9 7-10 7 1 7 7-1 8-9 6z" fill="#5e6266"/><path d="M8 7q3-4 5 0 0 2-2 2v2M11 12v2" fill="none" stroke="#fff" stroke-width="2"/></svg></button>
        <button class="sq blue units-btn" aria-label="Units and decimal places"><svg viewBox="0 0 20 20"><path d="M2 1h16v4H2z" fill="#8fd47e"/><path d="M5 3v2M8 3v2M11 3v2M14 3v2" stroke="#4a8a3a"/><text x="1" y="15" class="dec">0,00</text><path d="M9 17.500h9" stroke="#26307c"/></svg></button>
        <span class="grow"></span>
        <button class="btn primary">OK</button>
        <button class="btn">Cancel</button>
        <button class="btn" disabled>Apply</button>
        <i class="resize"></i>
      </footer>
    </section>
  </main>

  <footer class="statusbar">
    <div class="toggles"><button>SNAP</button><button>GRID</button><button>LGRID</button><button>OSNAP</button></div>
    <span class="cell w90"></span>
    <span class="cell w106"></span>
    <span class="cell w156">CS: Global XYZ</span>
    <span class="cell w66">Plane: XY</span>
    <span class="cell w76"></span>
    <span class="cell w76"></span>
    <span class="cell w76"></span>
    <span class="cell w18"><i class="resize"></i></span>
  </footer>
</div>

</body>
</html>
```
FILE: styles.css
```css
* { box-sizing: border-box; }
body {
  margin: 0;
  font-family: "Open Sans", "Noto Sans", sans-serif;
  font-size: 11px;
  line-height: 15px;
  color: #000;
}
button { font: inherit; color: inherit; border: none; background: none; padding: 0; margin: 0; }
h1, h2 { margin: 0; font-size: 11px; font-weight: normal; }
.sprite { position: absolute; width: 0; height: 0; }
.grow { flex: 1; }
.tiny { font-size: 8px; fill: #333; }
.bold { font-weight: bold; }

.app {
  display: flex;
  flex-direction: column;
  height: 100vh;
  border: 1px solid #a0a0a0;
  background: #fff;
}

/* title bar */
.titlebar, .dlgbar { display: flex; align-items: center; height: 30px; padding: 0 0 2px 7px; flex: none; }
.titlebar { color: #8c8c8c; }
.logo { width: 17px; height: 17px; margin-right: 5px; }
.winbtns { margin-left: auto; display: flex; }
.winbtns button { width: 46px; height: 28px; }
.winbtns svg { width: 12px; height: 12px; fill: none; stroke: #888; display: block; margin: auto; }

/* menu */
.menubar { display: flex; align-items: center; height: 20px; background: #f7f7f7; flex: none; }
.menulogo { width: 16px; height: 12px; }
.menubar > button { padding: 0 8px 2px; }
.mdi { margin-left: auto; display: flex; gap: 2px; margin-right: 1px; }
.mdi button { width: 16px; height: 18px; background: #fff; border: 1px solid #e2e2e2; }
.mdi svg { width: 10px; height: 10px; display: block; margin: auto; fill: none; stroke: #6c7a8c; stroke-width: 2; }
.mdi .thin { stroke-width: 1; }

/* toolbars */
.toolbar { display: flex; height: 28px; background: #f7f7f7; border-top: 1px solid #dedede; flex: none; }
.group { display: flex; align-items: center; border-right: 1px solid #d4d4d4; }
.group::before {
  content: "";
  width: 2px;
  height: 19px;
  margin: 0 4px;
  background: repeating-linear-gradient(#b8b8b8 0 2px, transparent 2px 4px);
}
.group:first-child::before { margin-right: 3px; }
.group.last { flex: 1; border-right: none; }
.tool { width: 26px; height: 26px; flex: none; }
.tool svg { width: 20px; height: 20px; display: block; margin: auto; overflow: visible; }
.drop { width: 12px; height: 26px; display: flex; align-items: center; justify-content: center; }
.drop::after { content: ""; border: 4px solid transparent; border-top-color: #222; border-bottom: none; }
.drop.off::after { border-top-color: #888; }
.sep { width: 1px; height: 19px; margin: 0 3px; background: #cfcfcf; }
.more { width: 15px; font-size: 13px; color: #555; }
.combo { background-color: #e6e6f0; }
.loadcase { width: 270px; height: 21px; display: flex; align-items: center; padding-left: 5px; }
.swatch { width: 11px; height: 11px; background: #ccffff; margin-right: 3px; }
.tag { width: 30px; height: 13px; line-height: 13px; background: #000; color: #fff; text-align: center; font-weight: normal; }
.lc { width: 35px; padding-left: 6px; }
select {
  appearance: none;
  border: none;
  border-radius: 0;
  margin: 0;
  color: #000;
  font: inherit;
  flex: 1;
  height: 21px;
  background: url("data:image/svg+xml,%3Csvg xmlns='http://www.w3.org/2000/svg' width='9' height='6'%3E%3Cpath d='M0.5 0.5l4 4 4-4' fill='none' stroke='%23444'/%3E%3C/svg%3E") no-repeat right 5px center;
}
.loadcase select { border-left: 1px solid #fff; height: 15px; padding: 0 6px; }
.coord { width: 132px; height: 21px; display: flex; align-items: center; padding-left: 5px; }
.coord select { padding: 0 2px; }
.step { width: 15px; height: 21px; margin-left: 1px; display: flex; align-items: center; justify-content: center; background: #e6e6f0; }
.step::after { content: ""; border: 4px solid transparent; }
.prev { background: #cfcfcf; }
.prev::after { border-right-color: #555; border-left: none; }
.next::after { border-left-color: #000; border-right: none; }

/* model view */
.viewport { flex: 1; position: relative; min-height: 0; background: #fff; }
.scene { display: block; width: 100%; height: 100%; font-size: 10px; }
.dots { fill: none; stroke-width: 1; stroke-dasharray: 1 18; }
.grey { stroke: #cacaca; }
.white { stroke: #fff; }
.beam { fill: #3a3aff; fill-opacity: .9; stroke: #3a3ae0; stroke-opacity: .5; }
.cross { fill: #3434dc; fill-opacity: .94; }
.diag { fill: none; stroke: #3838ee; stroke-width: 7; stroke-opacity: .95; }
.support { fill: #18d018; fill-opacity: .85; stroke: #12b812; }
.hiddensupport { fill: #2f7f9f; stroke: #2f8f9f; opacity: .7; }
.hanger { stroke: #9494bc; stroke-width: 3; stroke-opacity: .85; }
.node { fill: #b8206c; stroke: #9c2090; fill-opacity: .8; stroke-opacity: .7; }
.outline { fill: none; stroke-opacity: .6; }
.dimtext { font-size: 11px; font-weight: 600; fill: #ff0000; }
.cubeline { fill: none; stroke: #0b8080; stroke-width: 2; }
.cubeedge { fill: none; stroke: #5b9a9a; }
.face { font-size: 12px; font-weight: bold; }
.units { position: absolute; right: 5px; bottom: 5px; }

/* parameter dialog */
.dialog {
  position: absolute;
  left: 124px;
  right: 28px;
  bottom: 42px;
  background: #fff;
  border: 1px solid #6e6e6e;
  box-shadow: 0 4px 16px rgba(0, 0, 0, .35);
}
.dlgbar .winbtns svg { stroke: #000; }
.dlgbar .winbtns button:disabled svg { stroke: #bbb; }
.dlgbody { background: #d0d0d6; padding: 9px; }
.panel { background: #fff; }
.panel h2 { font-weight: 600; color: #5d6b94; line-height: 18px; padding-left: 5px; }
.tablewrap { height: 225px; background: linear-gradient(#f2f2f2, #f2f2f2) no-repeat left top / 40px 100%; }
table { width: 100%; table-layout: fixed; border-collapse: separate; border-spacing: 0; }
.c40 { width: 40px; }
.c80 { width: 80px; }
.c99 { width: 99px; }
.c103 { width: 103px; }
.c127 { width: 127px; }
.c150 { width: 150px; }
th, td { height: 16px; line-height: 15px; padding: 0 4px; font-weight: normal; white-space: nowrap; border-right: 1px solid #dcdcdc; border-bottom: 1px solid #dcdcdc; }
td { background: #fff; text-align: left; }
thead th { background: #f0f0f0; border-color: #cacaca; vertical-align: bottom; text-align: center; }
thead th.top { border-bottom: none; }
.strip td { height: 9px; background: #e1e1e1; border-color: #fff; }
th.no { background: #e1e1e1; border-color: #f8f8f8; text-align: center; }
td.ro { background: #f9faf4; }
td.red { background: #f3a1a5; border-color: #e08488; text-align: right; }
td.sel { outline: 1px dotted #000; outline-offset: -2px; }
.actions { display: flex; gap: 3px; padding: 15px 5px 5px; }
.sq { width: 25px; height: 21px; background: #e5e5e5; flex: none; }
.sq.blue { background: #cce4f7; }
.sq svg { width: 18px; height: 18px; display: block; margin: auto; }
.bottomrow { display: flex; gap: 10px; margin-top: 10px; }
.comment { flex: 3; padding-bottom: 4px; }
.preview { flex: 2; }
.commentline { display: flex; gap: 5px; padding: 4px 5px 0; }
.dlgfoot { display: flex; align-items: center; height: 41px; padding: 0 10px 0 9px; position: relative; }
.units-btn { margin-left: 10px; }
.dec { font-size: 9px; fill: #101050; }
.btn { width: 81px; height: 21px; margin-left: 10px; background: #e1e1e1; border: 1px solid #adadad; }
.btn.primary { border: 2px solid #0078d7; }
.btn:disabled { background: #ccc; border-color: #bfbfbf; color: #838383; }
.resize {
  position: absolute;
  right: 2px;
  bottom: 2px;
  width: 9px;
  height: 9px;
  clip-path: polygon(100% 0, 100% 100%, 0 100%);
  background: repeating-linear-gradient(90deg, #b4b4b4 0 2px, transparent 2px 3px);
}

/* status bar */
.statusbar { display: flex; align-items: stretch; justify-content: flex-end; height: 23px; padding: 2px 0; background: #f7f7f7; flex: none; line-height: 20px; }
.toggles { display: flex; gap: 2px; }
.toggles button { padding: 0 3px; background: #efefef; border: 1px solid #d6d6d6; border-width: 0 1px 0 1px; }
.cell { padding-left: 4px; border-left: 1px solid #d6d6d6; white-space: nowrap; position: relative; }
.w90 { width: 90px; border-left: none; }
.w106 { width: 106px; }
.w156 { width: 156px; }
.w66 { width: 66px; }
.w76 { width: 76px; }
.w18 { width: 18px; }
```
